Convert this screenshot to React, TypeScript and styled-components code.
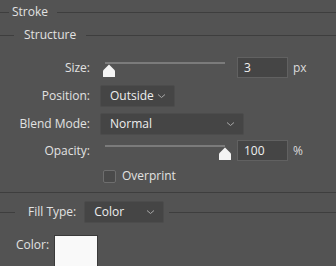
import React from "react";
import styled, { createGlobalStyle } from "styled-components";

const Global = createGlobalStyle`
  html, body { margin: 0; padding: 0; background: #535353; }
  body {
    width: 336px; height: 266px; overflow: hidden;
    font-family: "Open Sans", "Noto Sans", sans-serif;
    font-size: 12px; line-height: 16px; color: #e2e2e2;
  }
`;

const Panel = styled.div`
  display: flex;
  flex-direction: column;
  width: 336px;
  height: 266px;
  overflow: hidden;
`;

const Rule = styled.div<{ $w?: number }>`
  height: 1px;
  background: #3e3e3e;
  ${(p) => (p.$w != null ? `width:${p.$w}px; flex:none;` : `flex:1;`)}
`;

const Heading = styled.div<{ $gapL: number; $gapR: number; $mt: number }>`
  display: flex;
  align-items: center;
  height: 16px;
  margin-top: ${(p) => p.$mt}px;
  & > span { margin: 0 ${(p) => p.$gapR}px 0 ${(p) => p.$gapL}px; white-space: nowrap; }
`;

const Row = styled.div<{ $h: number; $mt: number }>`
  display: grid;
  grid-template-columns: 90px auto;
  column-gap: 10px;
  align-items: center;
  height: ${(p) => p.$h}px;
  margin-top: ${(p) => p.$mt}px;
`;

const Label = styled.span`
  text-align: right;
  white-space: nowrap;
`;

const Controls = styled.div`
  display: flex;
  align-items: center;
  gap: 5px;
`;

const SliderBox = styled.div`
  position: relative;
  width: 132px;
  height: 21px;
  flex: none;
`;

const Track = styled.div`
  position: absolute;
  left: 5px;
  top: 5px;
  width: 120px;
  height: 2px;
  background: #7b7b7b;
`;

const Thumb = styled.svg`
  position: absolute;
  top: 7px;
  width: 14px;
  height: 14px;
`;

const NumInput = styled.div`
  box-sizing: border-box;
  width: 51px;
  height: 21px;
  background: #454545;
  border: 1px solid #616161;
  padding-left: 6px;
  line-height: 19px;
  color: #f0f0f0;
  flex: none;
`;

const Unit = styled.span`
  color: #dcdcdc;
`;

const Select = styled.div<{ $w: number }>`
  box-sizing: border-box;
  width: ${(p) => p.$w}px;
  height: 22px;
  background: #454545;
  border: 1px solid #4c4c4c;
  border-radius: 2px;
  display: flex;
  align-items: center;
  justify-content: space-between;
  padding: 0 8px 0 9px;
  color: #eeeeee;
  flex: none;
`;

const Check = styled.span`
  box-sizing: border-box;
  width: 13px;
  height: 13px;
  border: 1px solid #6e6e6e;
  border-radius: 2px;
  background: #4a4a4a;
  margin-left: 3px;
  flex: none;
`;

const CheckRow = styled.div`
  display: flex;
  align-items: center;
  gap: 6px;
`;

const FillRow = styled.div`
  display: flex;
  align-items: center;
  height: 22px;
  margin-top: 8px;
`;

const FillLabel = styled.span`
  margin: 0 8px 0 13px;
  white-space: nowrap;
`;

const ColorRow = styled.div`
  display: flex;
  align-items: flex-start;
  margin-top: 12px;
  padding-left: 16px;
  gap: 5px;
`;

const ColorLabel = styled.span`
  margin-top: 2px;
`;

const Swatch = styled.div`
  box-sizing: border-box;
  width: 44px;
  height: 34px;
  background: #f9f9f9;
  border: 1px solid #3a3a3a;
  flex: none;
`;

const Chevron = () => (
  <svg width="9" height="6" viewBox="0 0 9 6">
    <path d="M1 1.5 L4.5 4.5 L8 1.5" fill="none" stroke="#a8a8a8" strokeWidth="1" />
  </svg>
);

const Slider = ({ pct }: { pct: number }) => (
  <SliderBox>
    <Track />
    <Thumb viewBox="0 0 14 14" style={{ left: 1 + pct * 117 }}>
      <path d="M7 0.5 L12.5 6 Q13 6.5 13 7.5 L13 12.5 Q13 13 12.5 13 L1.5 13 Q1 13 1 12.5 L1 7.5 Q1 6.5 1.5 6 Z" fill="#f4f4f4" />
    </Thumb>
  </SliderBox>
);

export default function App() {
  return (
    <>
      <Global />
      <Panel>
        <Heading $gapL={3} $gapR={9} $mt={4}>
          <Rule $w={9} />
          <span>Stroke</span>
          <Rule />
        </Heading>
        <Heading $gapL={10} $gapR={10} $mt={7}>
          <Rule $w={14} />
          <span>Structure</span>
          <Rule />
        </Heading>
        <Row $h={21} $mt={14}>
          <Label>Size:</Label>
          <Controls>
            <Slider pct={3 / 250} />
            <NumInput>3</NumInput>
            <Unit>px</Unit>
          </Controls>
        </Row>
        <Row $h={22} $mt={7}>
          <Label>Position:</Label>
          <Controls>
            <Select $w={75}>Outside<Chevron /></Select>
          </Controls>
        </Row>
        <Row $h={22} $mt={6}>
          <Label>Blend Mode:</Label>
          <Controls>
            <Select $w={144}>Normal<Chevron /></Select>
          </Controls>
        </Row>
        <Row $h={21} $mt={5}>
          <Label>Opacity:</Label>
          <Controls>
            <Slider pct={1} />
            <NumInput>100</NumInput>
            <Unit>%</Unit>
          </Controls>
        </Row>
        <Row $h={16} $mt={7}>
          <span />
          <CheckRow>
            <Check />
            <span>Overprint</span>
          </CheckRow>
        </Row>
        <Rule style={{ flex: "none", marginTop: 8 }} />
        <FillRow>
          <Rule $w={15} />
          <FillLabel>Fill Type:</FillLabel>
          <Select $w={80}>Color<Chevron /></Select>
          <Rule style={{ marginLeft: 5 }} />
        </FillRow>
        <ColorRow>
          <ColorLabel>Color:</ColorLabel>
          <Swatch />
        </ColorRow>
      </Panel>
    </>
  );
}
